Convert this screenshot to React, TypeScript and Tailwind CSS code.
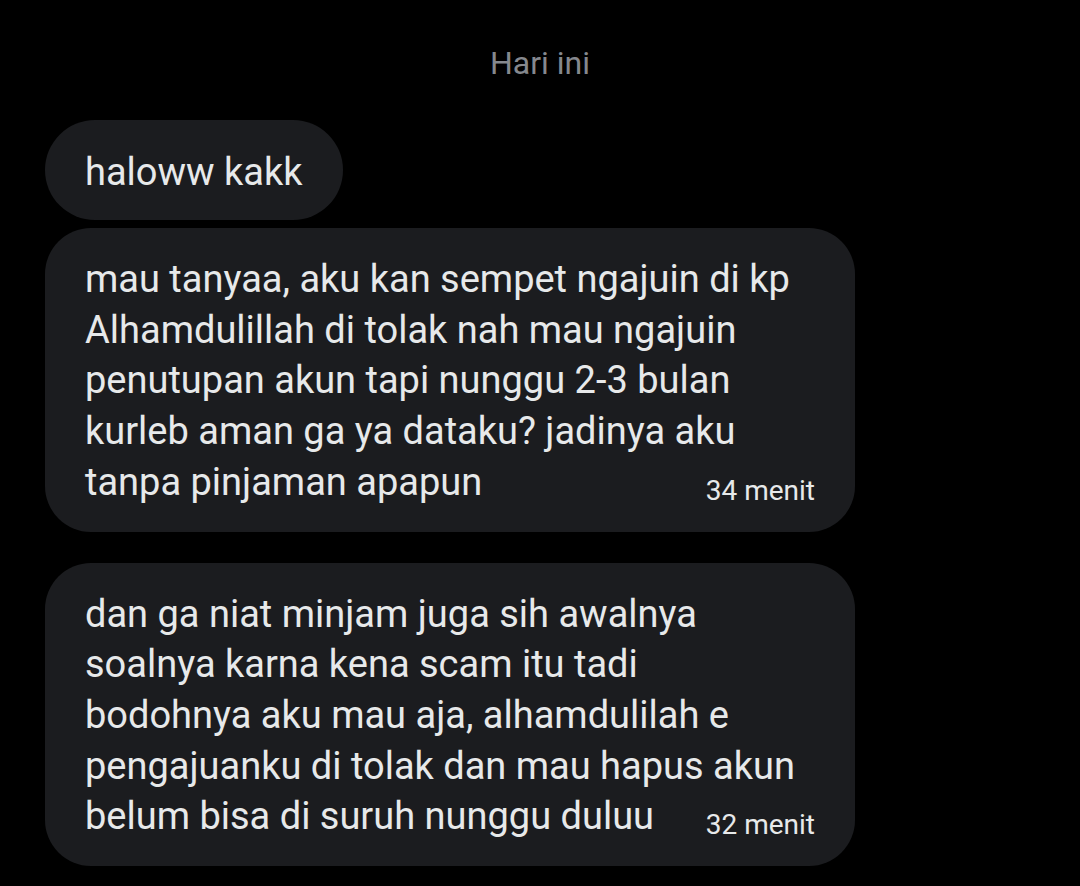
const messages = [
  {
    lines: [
      "mau tanyaa, aku kan sempet ngajuin di kp",
      "Alhamdulillah di tolak nah mau ngajuin",
      "penutupan akun tapi nunggu 2-3 bulan",
      "kurleb aman ga ya dataku? jadinya aku",
      "tanpa pinjaman apapun",
    ],
    time: "34 menit",
  },
  {
    lines: [
      "dan ga niat minjam juga sih awalnya",
      "soalnya karna kena scam itu tadi",
      "bodohnya aku mau aja, alhamdulilah e",
      "pengajuanku di tolak dan mau hapus akun",
      "belum bisa di suruh nunggu duluu",
    ],
    time: "32 menit",
  },
];

export default function App() {
  return (
    <div
      className="min-h-[886px] w-[1080px] bg-black text-[#e7e9ea]"
      style={{ fontFamily: "Roboto, 'Noto Sans', sans-serif" }}
    >
      <div className="pt-[44px] text-center text-[32px] leading-[38px] text-[#85888e]">
        Hari ini
      </div>

      <div className="mt-[38px] flex flex-col items-start pl-[45px]">
        <div className="rounded-full bg-[#1b1c1f] px-10 pt-[27px] pb-[23px] text-[38px] leading-[50px]">
          haloww kakk
        </div>

        {messages.map((m, i) => (
          <div
            key={i}
            className={`${i === 0 ? "mt-2" : "mt-[31px]"} w-[810px] rounded-[46px] bg-[#1b1c1f] px-10 pt-[26px] pb-6 text-[38px] leading-[50.7px]`}
          >
            {m.lines.slice(0, -1).map((line) => (
              <div key={line}>{line}</div>
            ))}
            <div className="flex items-end justify-between">
              <span>{m.lines[m.lines.length - 1]}</span>
              <span className="text-[28px] leading-[34px] text-[#e7e9ea]">{m.time}</span>
            </div>
          </div>
        ))}
      </div>
    </div>
  );
}
